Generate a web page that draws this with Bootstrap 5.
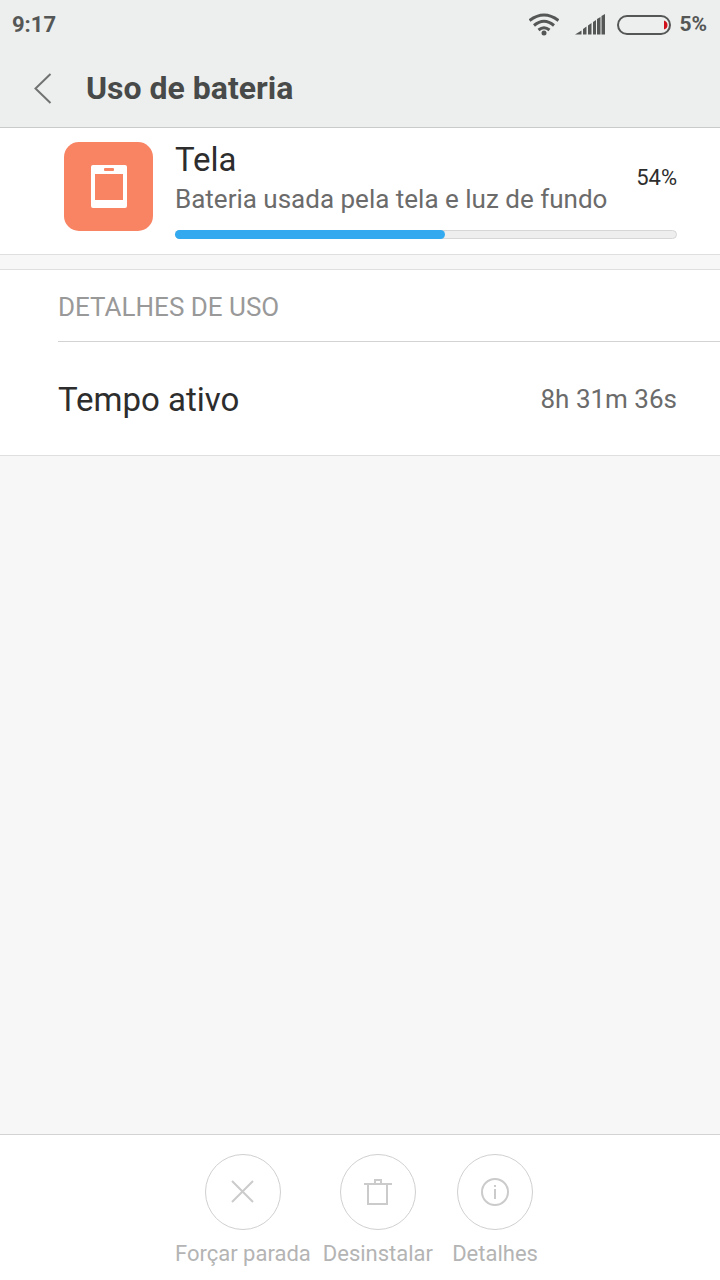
<!DOCTYPE html>
<html lang="pt-BR">
<head>
<meta charset="utf-8">
<meta name="viewport" content="width=device-width, initial-scale=1">
<title>Uso de bateria</title>
<link href="https://cdn.jsdelivr.net/npm/bootstrap@5.3.0/dist/css/bootstrap.min.css" rel="stylesheet">
<style>
  body { font-family: Roboto, "Liberation Sans", sans-serif; background: #f7f7f7; color: #2d2d2d; line-height: 1.2; }
  svg { display: block; flex: none; }
  .top-area { background: #edefee; border-bottom: 1px solid #c9cbca; color: #484a49; }
  .status-bar { height: 50px; padding: 0 13px 0 12px; font-size: 22px; font-weight: 700; color: #555756; }
  .battery-level { font-size: 21px; }
  .title-bar { height: 77px; padding: 0 32px; gap: 32px; }
  .title-bar h1 { font-size: 32px; font-weight: 700; }
  .back-btn { line-height: 0; }
  .panel { background: #fff; border-bottom: 1px solid #dfdfdf; }
  .panel-next { border-top: 1px solid #dfdfdf; margin-top: 14px; }
  .usage { padding: 14px 43px 15px 64px; gap: 22px; }
  .item-name { font-size: 33px; line-height: 36px; }
  .item-note { font-size: 26px; line-height: 42px; color: #6b6b6b; }
  .item-share { font-size: 22px; line-height: 72px; }
  .usage-meter { height: 9px; margin-top: 10px; border-radius: 5px; background: #eee; border: 1px solid #d6d6d6; overflow: visible; }
  .usage-meter .progress-bar { background: #33aaf0; border-radius: 5px; margin: -1px 0 -1px -1px; }
  .details { padding-left: 58px; }
  .details h2 { font-size: 26px; font-weight: 400; line-height: 72px; height: 72px; padding-top: 1px; color: #999; border-bottom: 1px solid #d3d3d3; }
  .detail-row { height: 113px; padding: 2px 43px 0 0; }
  .detail-value { font-size: 26px; color: #6b6b6b; }
  .actions { background: #fff; border-top: 1px solid #d3d3d3; padding: 19px 0 12px; gap: 12px; }
  .action-btn { min-width: 100px; font-size: 22px; line-height: 28px; gap: 10px; color: #b4b4b4; }
  .action-btn:disabled { color: #b4b4b4; opacity: 1; border: 0; }
  .ring { width: 76px; height: 76px; border: 1px solid #d0d0d0; color: #cbcbcb; }
</style>
</head>
<body class="d-flex flex-column min-vh-100">
<header class="top-area">
  <div class="status-bar d-flex align-items-center justify-content-between">
    <span>9:17</span>
    <div class="d-flex align-items-center">
      <svg class="me-3" width="30" height="24" viewBox="0 0 30 24" fill="none" stroke="#555756" stroke-width="3" role="img" aria-label="Wi-Fi">
        <path d="M0.500 7.500Q15-3.500 29.500 7.500M5 12.500Q15 4 25 12.500M9.500 17Q15 12.500 20.500 17"/>
        <circle cx="15" cy="20" r="2.500" fill="#555756" stroke="none"/>
      </svg>
      <svg class="me-2" width="30" height="22" viewBox="0 0 30 22" fill="#555756" role="img" aria-label="Sinal">
        <path d="M0 20.500L6.500 16.500V20.500ZM8 15L11.500 12.500V20.500H8ZM13 11.500L16.500 9V20.500H13ZM18 8L21 6V20.500H18ZM22 5L25.500 3V20.500H22ZM26.500 2L30 0V20.500H26.500Z"/>
      </svg>
      <svg class="ms-1 me-2" width="54" height="20" viewBox="0 0 54 20" role="img" aria-label="Bateria">
        <rect x="1" y="1" width="52" height="18" rx="9" fill="none" stroke="#555756" stroke-width="2"/>
        <path d="M47 5.500Q50.500 6.500 50.500 10T47 14.500Z" fill="#d0101a"/>
      </svg>
      <span class="battery-level">5%</span>
    </div>
  </div>
  <div class="title-bar d-flex align-items-center">
    <button type="button" class="back-btn btn p-0 border-0" aria-label="Voltar">
      <svg width="22" height="32" viewBox="0 0 22 32" fill="none" stroke="#717372" stroke-width="2"><path d="M18.500 1L3.500 15.500L18.500 30"/></svg>
    </button>
    <h1 class="mb-0">Uso de bateria</h1>
  </div>
</header>
<main class="flex-grow-1">
  <section class="panel usage d-flex align-items-start">
    <svg width="89" height="89" viewBox="0 0 89 89" aria-hidden="true">
      <rect width="89" height="89" rx="15" fill="#f88464"/>
      <rect x="27" y="23" width="36" height="43" rx="2" fill="#fff"/>
      <path d="M31 32H59V58H31Z" fill="#f88464"/>
      <rect x="40" y="26" width="10" height="3" rx="1" fill="#f88464"/>
    </svg>
    <div class="flex-grow-1">
      <div class="d-flex align-items-start justify-content-between">
        <div>
          <div class="item-name">Tela</div>
          <div class="item-note">Bateria usada pela tela e luz de fundo</div>
        </div>
        <span class="item-share">54%</span>
      </div>
      <div class="usage-meter progress" role="progressbar" aria-label="Tela" aria-valuenow="54" aria-valuemin="0" aria-valuemax="100">
        <div class="progress-bar" style="width: 54%"></div>
      </div>
    </div>
  </section>
  <section class="panel panel-next details">
    <h2 class="mb-0">DETALHES DE USO</h2>
    <div class="detail-row d-flex align-items-center justify-content-between">
      <span class="item-name">Tempo ativo</span>
      <span class="detail-value">8h 31m 36s</span>
    </div>
  </section>
</main>
<footer class="actions d-flex justify-content-center">
  <button type="button" class="action-btn btn p-0 border-0 d-flex flex-column align-items-center" disabled>
    <span class="ring rounded-circle d-flex align-items-center justify-content-center">
      <svg width="28" height="28" viewBox="0 0 28 28" fill="none" stroke="currentColor" stroke-width="2"><path d="M3 3L24 24M24 3L3 24"/></svg>
    </span>
    <span>Forçar parada</span>
  </button>
  <button type="button" class="action-btn btn p-0 border-0 d-flex flex-column align-items-center" disabled>
    <span class="ring rounded-circle d-flex align-items-center justify-content-center">
      <svg width="28" height="28" viewBox="0 0 28 28" fill="none" stroke="currentColor" stroke-width="2"><path d="M0 6H28M4 6V26H23V6M11 6V2H17V6"/></svg>
    </span>
    <span>Desinstalar</span>
  </button>
  <button type="button" class="action-btn btn p-0 border-0 d-flex flex-column align-items-center" disabled>
    <span class="ring rounded-circle d-flex align-items-center justify-content-center">
      <svg width="28" height="28" viewBox="0 0 28 28" fill="none" stroke="currentColor" stroke-width="2"><circle cx="14" cy="14" r="13"/><path d="M14 11V21M14 7V9"/></svg>
    </span>
    <span>Detalhes</span>
  </button>
</footer>
<script src="https://cdn.jsdelivr.net/npm/bootstrap@5.3.0/dist/js/bootstrap.bundle.min.js"></script>
</body>
</html>
